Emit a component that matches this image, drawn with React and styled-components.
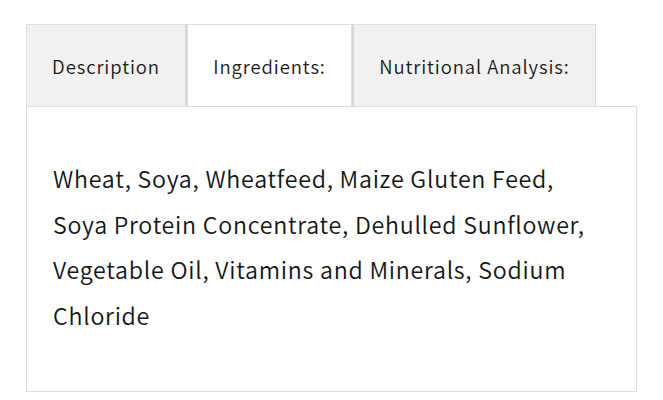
import React, { useState } from "react";
import styled, { createGlobalStyle, css } from "styled-components";

const Global = createGlobalStyle`
  html, body { margin: 0; padding: 0; background: #ffffff; }
  body { font-family: "Noto Sans CJK SC", "Source Sans Pro", "Noto Sans", sans-serif; color: #1d1d1d; }
`;

const Wrap = styled.div`
  padding: 24px 26px 10px 26px;
  width: 611px;
`;

const TabRow = styled.div`
  display: flex;
  align-items: stretch;
  position: relative;
  z-index: 1;
`;

const Tab = styled.button`
  font-family: inherit;
  font-size: 18.5px;
  font-weight: 350;
  letter-spacing: 0.9px;
  color: #1a1a1a;
  height: 82px;
  width: ${(p) => p.$w}px;
  padding: 0;
  margin: 0;
  border: 1px solid #dedede;
  border-bottom: none;
  background: #f2f1f2;
  cursor: pointer;
  box-sizing: border-box;
  ${(p) =>
    p.$active &&
    css`
      background: #ffffff;
      margin-bottom: -1px;
    `}
  ${(p) =>
    p.$edge === "right" &&
    css`
      border-right: 2px solid #d6d6d6;
    `}
  ${(p) =>
    p.$edge === "left" &&
    css`
      border-left: 2px solid #d6d6d6;
    `}
`;

const Panel = styled.div`
  border: 1.5px solid #dedede;
  box-sizing: border-box;
  height: 286px;
  padding: 49px 26px 0 26px;
`;

const Body = styled.p`
  margin: 0;
  font-size: 23.2px;
  font-weight: 350;
  line-height: 45.5px;
  letter-spacing: 0.75px;
  color: #151515;
`;

const tabs = [
  { label: "Description", w: 161 },
  { label: "Ingredients:", w: 165 },
  { label: "Nutritional Analysis:", w: 244 },
];

export default function App() {
  const [active, setActive] = useState(1);
  return (
    <Wrap>
      <Global />
      <TabRow>
        {tabs.map((t, i) => (
          <Tab
            key={t.label}
            $w={t.w}
            $active={i === active}
            $edge={i === active - 1 ? "right" : i === active + 1 ? "left" : undefined}
            onClick={() => setActive(i)}
          >
            {t.label}
          </Tab>
        ))}
      </TabRow>
      <Panel>
        <Body>
          Wheat, Soya, Wheatfeed, Maize Gluten Feed, Soya Protein Concentrate, Dehulled
          Sunflower, Vegetable Oil, Vitamins and Minerals, Sodium Chloride
        </Body>
      </Panel>
    </Wrap>
  );
}
